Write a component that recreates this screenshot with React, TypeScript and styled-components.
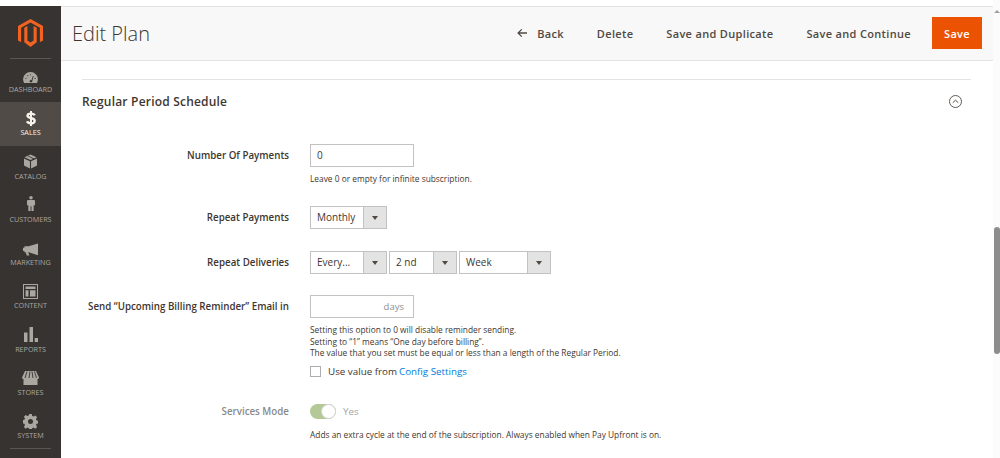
import React from "react";
import styled, { createGlobalStyle } from "styled-components";

const Global = createGlobalStyle`
  html, body { margin: 0; padding: 0; height: 458px; overflow: hidden; background: #fff; }
  body { font-family: "Open Sans", "Noto Sans", sans-serif; color: #303030; }
  * { box-sizing: border-box; }
`;

const Page = styled.div`
  width: 1000px; height: 458px; display: flex; overflow: hidden; background: #fff;
`;
const Main = styled.div`
  flex: none; width: 993px; height: 458px; display: flex; padding-top: 6px; overflow: hidden;
`;
const Scrollbar = styled.div`
  flex: none; width: 7px; height: 458px; background: #fbfbfb; display: flex; flex-direction: column; align-items: flex-end;
`;
const ScrollArrow = styled.div`
  margin: 10px .5px 0 0; width: 0; height: 0; border-left: 3px solid transparent; border-right: 3px solid transparent; border-bottom: 3px solid #a0a0a0;
`;
const ScrollThumb = styled.div`
  margin-top: 214px; width: 6px; height: 127px; border-radius: 3px; background: #8d8d8d;
`;
const Sidebar = styled.nav`
  flex: none; width: 61px; height: 452px; background: #373330; display: flex; flex-direction: column; align-items: stretch; overflow: hidden;
`;
const LogoWrap = styled.div`
  height: 53px; margin: 0 10px; display: flex; align-items: flex-start; justify-content: center; padding-top: 13px;
  border-bottom: 1px solid #5a5653;
  flex: none;
`;
const NavItem = styled.div<{ $active?: boolean }>`
  flex: none; height: 43.25px; display: flex; flex-direction: column; align-items: center; justify-content: flex-start;
  background: ${(p) => (p.$active ? "#514b48" : "transparent")};
  padding-top: 6px;
`;
const NavIcon = styled.div`
  height: 17.5px; display: flex; align-items: flex-end; justify-content: center;
  svg { display: block; }
`;
const NavLabel = styled.span<{ $active?: boolean }>`
  font-size: 7.2px; line-height: 10px; margin-top: 1.5px; letter-spacing: 0; text-transform: uppercase;
  color: ${(p) => (p.$active ? "#f7f3eb" : "#aaa6a0")}; white-space: nowrap;
`;
const NavRule = styled.div`
  flex: none; margin: 0 10px; height: 1px; background: #5a5653;
`;
const Content = styled.main`
  flex: 1; min-width: 0; display: flex; flex-direction: column;
`;
const Header = styled.header`
  flex: none; height: 55px; background: #f8f8f8; border-top: 1px solid #e3e3e3; border-bottom: 1px solid #e3e3e3;
  display: flex; align-items: center; justify-content: space-between; padding: 0 11px 1px 11px;
`;
const Title = styled.h1`
  margin: 1px 0 0; font-weight: 300; font-size: 20px; color: #41362f; line-height: 28px; font-family: "Open Sans", sans-serif;
`;
const Actions = styled.div`
  display: flex; align-items: center;
`;
const Action = styled.button`
  border: 0; background: none; padding: 0; margin: 0 0 0 33px; font: 600 11px "Open Sans", sans-serif; letter-spacing: .33px; color: #514943;
  display: flex; align-items: center; white-space: nowrap;
`;
const BackArrow = styled.svg`
  width: 10px; height: 10px; margin-right: 10px;
`;
const SaveButton = styled.button`
  border: 0; margin: 0 0 0 21px; width: 50px; height: 32px; background: #eb5202; color: #fff; font: 600 11px "Open Sans", sans-serif; letter-spacing: .33px;
`;
const Body = styled.div`
  flex: 1; padding: 18px 22px 0 21px; overflow: hidden;
`;
const Section = styled.section`
  border-top: 1px solid #e3e3e3;
`;
const SectionHead = styled.div`
  height: 43px; display: flex; align-items: center; justify-content: space-between; padding-right: 9px; margin-bottom: 21px;
`;
const SectionTitle = styled.h2`
  margin: 0; font-size: 12px; font-weight: 600; color: #41362f; letter-spacing: .2px;
`;
const Field = styled.div<{ $mt?: number }>`
  display: grid; grid-template-columns: 207px 1fr; column-gap: 21px; align-items: start;
  margin-top: ${(p) => p.$mt ?? 0}px;
`;
const Label = styled.label<{ $muted?: boolean }>`
  font-size: 9.75px; line-height: 23px; font-weight: 600; text-align: right; color: ${(p) => (p.$muted ? "#8a8a8a" : "#41362f")}; white-space: nowrap;
`;
const Control = styled.div`
  min-width: 0;
`;
const TextBox = styled.div<{ $right?: boolean }>`
  width: 104px; height: 23px; border: 1px solid #c2c2c2; background: #fff; font-size: 10px; line-height: 21px; padding: 0 6px;
  color: #41362f;
  ${(p) => p.$right && "text-align: right; padding-right: 9px; color: #8f8f8f; font-size: 9.5px;"}
`;
const Note = styled.div<{ $mt?: number }>`
  font-size: 8.36px; line-height: 11.4px; color: #41362f; margin-top: ${(p) => p.$mt ?? 0}px; white-space: nowrap;
`;
const Row = styled.div`
  display: flex; gap: 2px;
`;
const Select = styled.div<{ $w: number }>`
  width: ${(p) => p.$w}px; height: 23px; border: 1px solid #c2c2c2; background: #fff; display: flex; font-size: 10px; line-height: 21px; color: #41362f;
`;
const SelectText = styled.span`
  flex: 1; padding-left: 6px; white-space: nowrap; overflow: hidden;
`;
const SelectArrow = styled.span`
  flex: none; width: 23px; background: #e3e3e3; border-left: 1px solid #c2c2c2; display: flex; align-items: center; justify-content: center;
  &::after { content: ""; width: 0; height: 0; border-left: 3px solid transparent; border-right: 3px solid transparent; border-top: 4px solid #514943; }
`;
const CheckRow = styled.div`
  display: flex; align-items: center; margin-top: 6px; font-size: 9.8px; line-height: 14px; color: #41362f;
`;
const Check = styled.span`
  width: 11px; height: 11px; border: 1px solid #adadad; margin-right: 7px; background: #fff; flex: none;
`;
const Link = styled.a`
  color: #007bdb; margin-left: 2px;
`;
const Toggle = styled.div`
  display: flex; align-items: center; height: 16px; margin-top: 4px; font-size: 9.8px; color: #a5a5a5;
`;
const Track = styled.span`
  width: 26px; height: 15px; border-radius: 8px; background: #b3c998; display: flex; justify-content: flex-end; margin-right: 7px;
`;
const Knob = styled.span`
  width: 15px; height: 15px; border-radius: 50%; background: #fff; border: 1px solid #d5d5d5;
`;

const G = "#aaa6a0";
const icons: Record<string, React.ReactNode> = {
  dashboard: (
    <svg width="15" height="11" viewBox="0 0 16 12"><path fill={G} d="M8 0C3.6 0 0 3.6 0 8c0 1.4.3 2.8 1 4h14c.7-1.2 1-2.6 1-4 0-4.4-3.6-8-8-8z" /><path stroke="#373330" strokeWidth="1" d="M9 11 11 4.500" /><circle cx="8.500" cy="10" r="1.300" fill="#373330" /><circle cx="3" cy="7" r=".6" fill="#373330" /><circle cx="5" cy="4" r=".6" fill="#373330" /><circle cx="8" cy="3" r=".6" fill="#373330" /><circle cx="13" cy="7" r=".6" fill="#373330" /></svg>
  ),
  dollar: (
    <svg width="10" height="15" viewBox="0 0 10 15"><path fill="none" stroke="#f7f3eb" strokeWidth="2.400" d="M8.600 4.400C8.200 3.200 6.900 2.600 5 2.600c-2.200 0-3.500 1-3.500 2.200C1.500 7.800 8.700 6.200 8.700 9.900c0 1.400-1.500 2.400-3.700 2.400-2 0-3.400-.7-3.900-2" /><path stroke="#f7f3eb" strokeWidth="2" d="M5 0v15" /></svg>
  ),
  catalog: (
    <svg width="13" height="15" viewBox="0 0 14 15"><path fill={G} d="M7 0 13.500 3 7 6 .5 3zM0 4.200 6.400 7.100V15L0 11.800zM14 4.200 7.600 7.100V15L14 11.800z" /><path fill="#373330" d="M3.500 1.700 10 4.700l1-.5L4.500 1.200z" /></svg>
  ),
  customers: (
    <svg width="8" height="17" viewBox="0 0 9 17"><circle cx="4.500" cy="2" r="2" fill={G} /><path fill={G} d="M1.500 4.500h6c1 0 1.500.6 1.500 1.500v4.500H7.500V17H5V11.500H4V17H1.500V10.500H0V6c0-.9.5-1.500 1.500-1.500z" /></svg>
  ),
  marketing: (
    <svg width="15" height="13" viewBox="0 0 16 13"><path fill={G} d="M16 0v12.500L6 9.500H5.500L6.800 13H4L2.800 9.500H1.500V8H0V4.500h1.500V3H6z" /></svg>
  ),
  content: (
    <svg width="15" height="15" viewBox="0 0 15 15"><path fill={G} fillRule="evenodd" d="M0 0h15v15H0zM1 1v13h13V1z" /><path fill={G} d="M2.500 2.500h10v2.500h-10zM2.500 6.300h3v6.200h-3zM7 6.300h5.500v6.200H7z" /></svg>
  ),
  reports: (
    <svg width="14" height="15" viewBox="0 0 14 15"><path fill={G} d="M0 5.500h3.500V15H0zM5.500 0H9v15H5.500zM10.700 11H14v4h-3.300z" /></svg>
  ),
  stores: (
    <svg width="17" height="14" viewBox="0 0 17 14"><path fill={G} d="M3 0h11l3 6.500c0 1-1 1.500-1.500 1.500v6h-14V8C1 8 0 7.500 0 6.500z" /><path stroke="#373330" strokeWidth=".9" d="M5 .5 3 7M8 .5 7 7M10 .5 11 7M12.500 .5 14.500 7" /></svg>
  ),
  system: (
    <svg width="15" height="15" viewBox="0 0 15 15"><path fill={G} fillRule="evenodd" d="M6.200 0h2.600l.4 2 1.300.6 1.800-1.100 1.800 1.800-1.100 1.800.6 1.300 2 .4v2.600l-2 .4-.6 1.300 1.100 1.800-1.800 1.800-1.800-1.100-1.300.6-.4 2H6.200l-.4-2-1.300-.6-1.800 1.100-1.800-1.800 1.100-1.800-.6-1.300-2-.4V6.200l2-.4.6-1.300-1.100-1.800 1.800-1.800 1.800 1.100 1.300-.6zM7.500 5a2.500 2.500 0 1 0 0 5 2.500 2.500 0 0 0 0-5z" /></svg>
  ),
};

const nav = [
  ["dashboard", "Dashboard"],
  ["dollar", "Sales"],
  ["catalog", "Catalog"],
  ["customers", "Customers"],
  ["marketing", "Marketing"],
  ["content", "Content"],
  ["reports", "Reports"],
  ["stores", "Stores"],
  ["system", "System"],
];

export default function App() {
  return (
    <Page>
      <Global />
      <Main>
        <Sidebar>
          <LogoWrap>
            <svg width="25" height="28" viewBox="0 0 25 28">
              <path fill="#f26322" d="M12.500 0 25 7v14.400l-3.100 1.800V8.800L12.500 3.400 3.100 8.800v14.400L0 21.400V7z" />
              <path fill="#f26322" d="M15.600 6.900 18.700 8.700V23.200L12.500 28 6.300 23.200V8.700L9.400 6.900V21.600L12.500 23.400 15.600 21.600z" />
            </svg>
          </LogoWrap>
          {nav.map(([k, l]) => (
            <NavItem key={k} $active={k === "dollar"}>
              <NavIcon>{icons[k]}</NavIcon>
              <NavLabel $active={k === "dollar"}>{l}</NavLabel>
            </NavItem>
          ))}
          <NavRule />
        </Sidebar>
        <Content>
          <Header>
            <Title>Edit Plan</Title>
            <Actions>
              <Action>
                <BackArrow viewBox="0 0 11 10"><path fill="none" stroke="#514943" strokeWidth="1.400" d="M11 5H1.500M5.200 1 1.200 5l4 4" /></BackArrow>
                Back
              </Action>
              <Action>Delete</Action>
              <Action>Save and Duplicate</Action>
              <Action>Save and Continue</Action>
              <SaveButton>Save</SaveButton>
            </Actions>
          </Header>
          <Body>
            <Section>
              <SectionHead>
                <SectionTitle>Regular Period Schedule</SectionTitle>
                <svg width="13" height="13" viewBox="0 0 13 13"><circle cx="6.500" cy="6.500" r="6" fill="none" stroke="#514943" strokeWidth=".9" /><path fill="none" stroke="#514943" strokeWidth="1" d="M3.800 7.700 6.500 5.200l2.700 2.500" /></svg>
              </SectionHead>
              <Field>
                <Label>Number Of Payments</Label>
                <Control>
                  <TextBox>0</TextBox>
                  <Note $mt={6}>Leave 0 or empty for infinite subscription.</Note>
                </Control>
              </Field>
              <Field $mt={22}>
                <Label>Repeat Payments</Label>
                <Control>
                  <Select $w={77}><SelectText>Monthly</SelectText><SelectArrow /></Select>
                </Control>
              </Field>
              <Field $mt={22}>
                <Label>Repeat Deliveries</Label>
                <Control>
                  <Row>
                    <Select $w={77}><SelectText>Every...</SelectText><SelectArrow /></Select>
                    <Select $w={68}><SelectText>2 nd</SelectText><SelectArrow /></Select>
                    <Select $w={92}><SelectText>Week</SelectText><SelectArrow /></Select>
                  </Row>
                </Control>
              </Field>
              <Field $mt={21}>
                <Label>Send “Upcoming Billing Reminder” Email in</Label>
                <Control>
                  <TextBox $right>days</TextBox>
                  <Note $mt={6}>Setting this option to 0 will disable reminder sending.</Note>
                  <Note>Setting to “1” means “One day before billing”.</Note>
                  <Note>The value that you set must be equal or less than a length of the Regular Period.</Note>
                  <CheckRow><Check />Use value from <Link>Config Settings</Link></CheckRow>
                </Control>
              </Field>
              <Field $mt={21}>
                <Label $muted>Services Mode</Label>
                <Control>
                  <Toggle><Track><Knob /></Track>Yes</Toggle>
                  <Note $mt={9}>Adds an extra cycle at the end of the subscription. Always enabled when Pay Upfront is on.</Note>
                </Control>
              </Field>
            </Section>
          </Body>
        </Content>
      </Main>
      <Scrollbar>
        <ScrollArrow />
        <ScrollThumb />
      </Scrollbar>
    </Page>
  );
}
